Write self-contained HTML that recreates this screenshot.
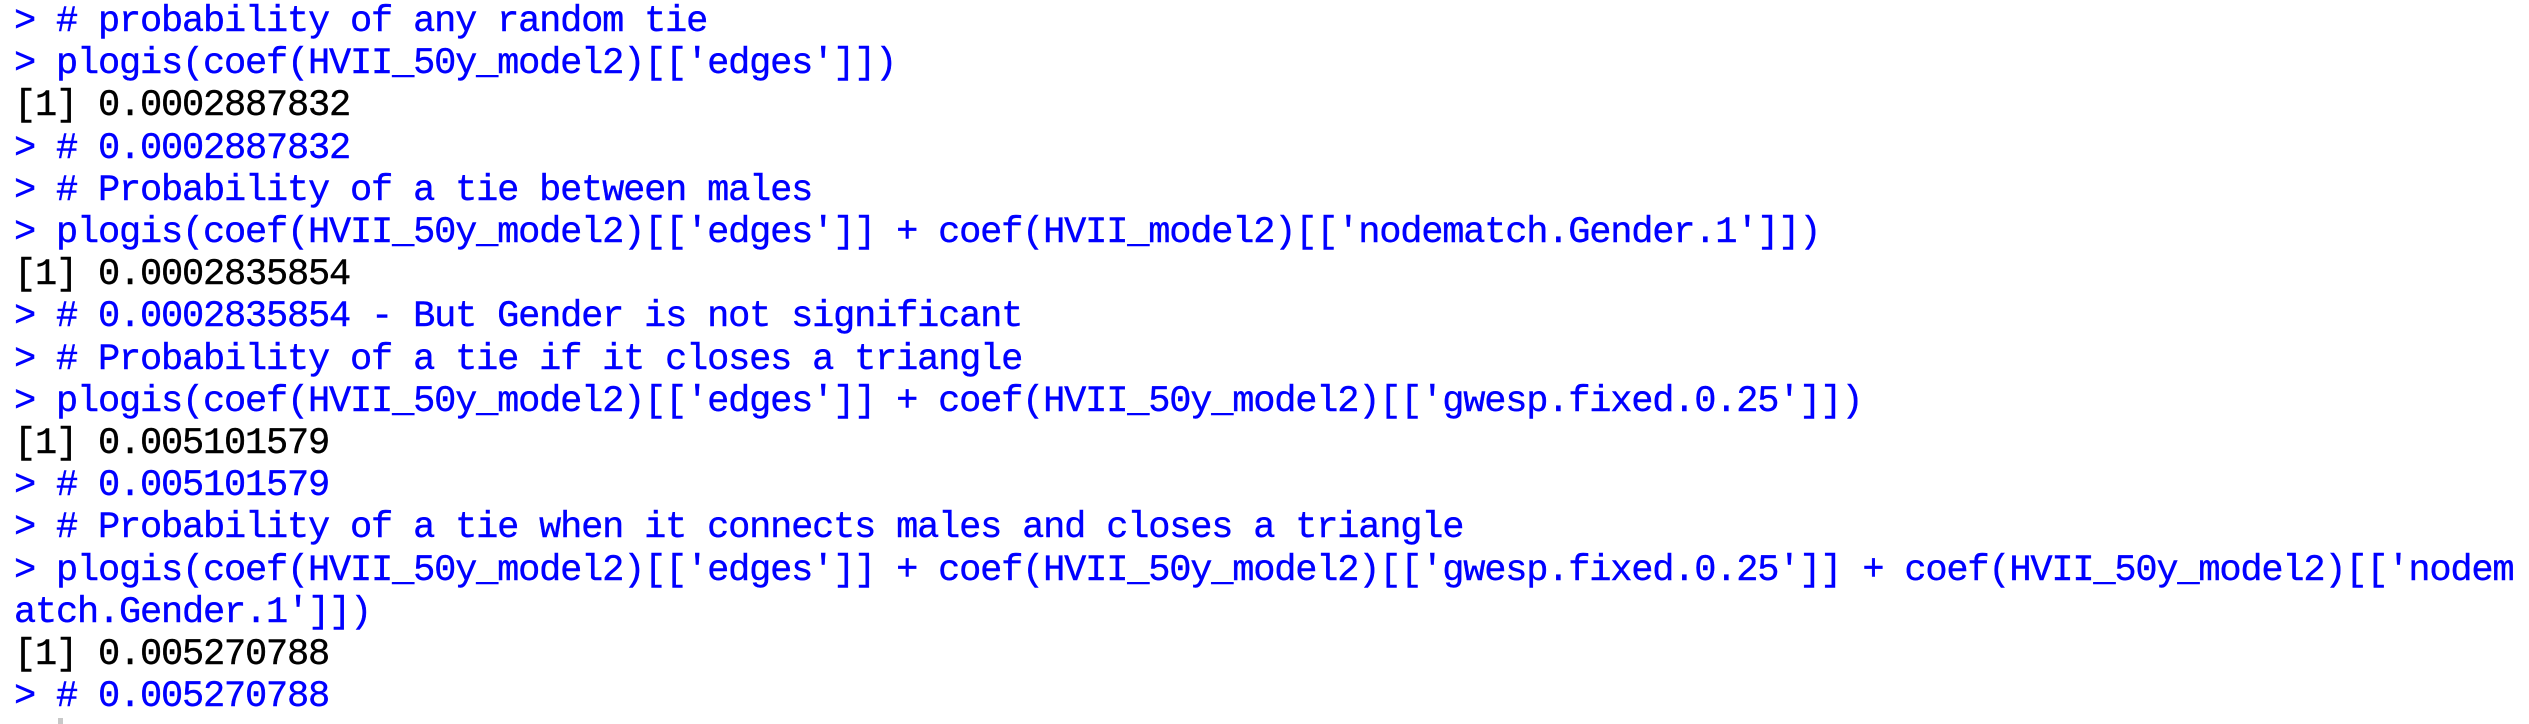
<!DOCTYPE html>
<html><head><meta charset="utf-8"><style>
html,body{margin:0;padding:0;background:#fff;width:2529px;height:724px;overflow:hidden}
pre{margin:0;position:absolute;left:14px;top:1px;font-family:"Liberation Mono",monospace;font-size:37px;letter-spacing:-1.2px;line-height:42.2px;color:#0000ff;-webkit-text-stroke:0.4px currentColor}
.o{color:#000}
#cur{position:absolute;left:58px;top:718px;width:5px;height:6px;background:#c8c8c8}
</style></head><body>
<pre>&gt; # probability of any random tie
&gt; plogis(coef(HVII_50y_model2)[['edges']])
<span class="o">[1] 0.0002887832</span>
&gt; # 0.0002887832
&gt; # Probability of a tie between males
&gt; plogis(coef(HVII_50y_model2)[['edges']] + coef(HVII_model2)[['nodematch.Gender.1']])
<span class="o">[1] 0.0002835854</span>
&gt; # 0.0002835854 - But Gender is not significant
&gt; # Probability of a tie if it closes a triangle
&gt; plogis(coef(HVII_50y_model2)[['edges']] + coef(HVII_50y_model2)[['gwesp.fixed.0.25']])
<span class="o">[1] 0.005101579</span>
&gt; # 0.005101579
&gt; # Probability of a tie when it connects males and closes a triangle
&gt; plogis(coef(HVII_50y_model2)[['edges']] + coef(HVII_50y_model2)[['gwesp.fixed.0.25']] + coef(HVII_50y_model2)[['nodem
atch.Gender.1']])
<span class="o">[1] 0.005270788</span>
&gt; # 0.005270788</pre>
<div id="cur"></div>
</body></html>
